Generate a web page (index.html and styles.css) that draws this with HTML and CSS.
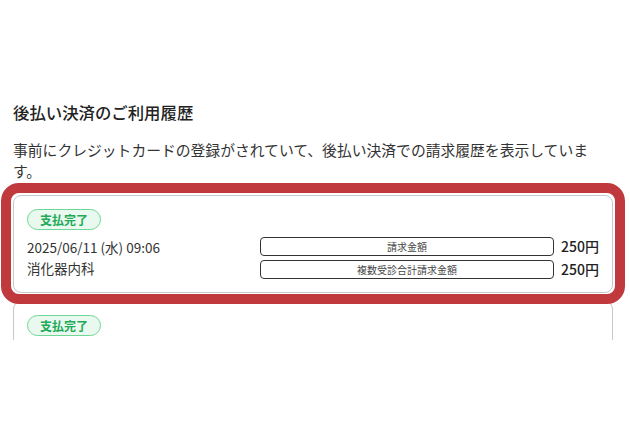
FILE: index.html
```html
<!DOCTYPE html>
<html lang="ja">
<head>
<meta charset="utf-8">
<title>後払い決済のご利用履歴</title>
<link rel="stylesheet" href="styles.css">
</head>
<body>
<div class="page">
  <h2 class="title">後払い決済のご利用履歴</h2>
  <p class="desc">事前にクレジットカードの登録がされていて、後払い決済での請求履歴を表示しています。</p>
  <div class="list">
    <div class="card">
      <span class="badge">支払完了</span>
      <div class="body">
        <div class="info">
          <div>2025/06/11 (水) 09:06</div>
          <div>消化器内科</div>
        </div>
        <div class="amounts">
          <div class="row"><span class="label">請求金額</span><span class="amount">250円</span></div>
          <div class="row"><span class="label">複数受診合計請求金額</span><span class="amount">250円</span></div>
        </div>
      </div>
    </div>
    <div class="card card-partial">
      <span class="badge">支払完了</span>
    </div>
  </div>
</div>
<div class="highlight"></div>
</body>
</html>
```
FILE: styles.css
```css
html, body {
  margin: 0;
  padding: 0;
  background: #ffffff;
}
body {
  position: relative;
  width: 630px;
  height: 432px;
  font-family: "Noto Sans CJK JP", "Noto Sans", sans-serif;
  color: #2b2b2b;
}
.page {
  height: 340px;
  overflow: hidden;
  padding: 100px 0 0 13px;
  box-sizing: border-box;
  width: 613px;
}
.title {
  margin: 0;
  font-size: 16.4px;
  line-height: 24px;
  font-weight: 500;
  color: #222;
}
.desc {
  margin: 15px 0 0;
  font-size: 14.8px;
  line-height: 21px;
  color: #333;
}
.list {
  margin-top: 14px;
  display: flex;
  flex-direction: column;
  gap: 8px;
}
.card {
  border: 1px solid #c6c8d0;
  border-radius: 8px;
  padding: 13px;
  display: flex;
  flex-direction: column;
  align-items: flex-start;
}
.card-partial {
  min-height: 80px;
}
.badge {
  display: inline-block;
  height: 21px;
  box-sizing: border-box;
  line-height: 19px;
  padding: 0 12px;
  border: 1px solid #6fd795;
  border-radius: 11px;
  background: #e9f9ef;
  color: #22aa58;
  font-size: 12px;
  font-weight: 700;
}
.body {
  margin-top: 7px;
  align-self: stretch;
  display: grid;
  grid-template-columns: 233px 1fr;
}
.info {
  font-size: 13.5px;
  line-height: 21px;
  color: #333;
}
.amounts {
  display: flex;
  flex-direction: column;
  gap: 4px;
}
.row {
  display: flex;
  align-items: center;
  gap: 7px;
}
.label {
  flex: 1;
  height: 19px;
  box-sizing: border-box;
  border: 1px solid #333;
  border-radius: 4px;
  text-align: center;
  font-size: 10px;
  line-height: 17px;
  color: #444;
}
.amount {
  font-size: 14px;
  font-weight: 500;
  color: #222;
  line-height: 19px;
}
.highlight {
  position: absolute;
  left: 1px;
  top: 183px;
  width: 624px;
  height: 121px;
  box-sizing: border-box;
  border: 10px solid #c03a3d;
  border-radius: 18px;
  pointer-events: none;
}
```
